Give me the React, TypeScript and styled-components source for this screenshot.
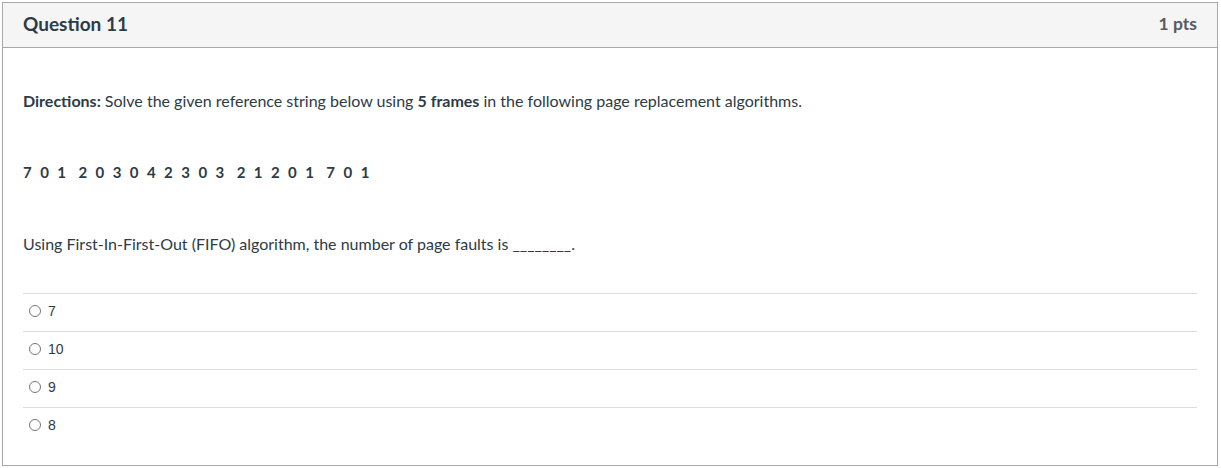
import styled, { createGlobalStyle } from "styled-components";

const GlobalStyle = createGlobalStyle`
  body {
    margin: 0;
    background: #ffffff;
    font-family: Lato, "Open Sans", sans-serif;
    color: #2d3b45;
  }
`;

const options = ["7", "10", "9", "8"];
const refGroups = ["7 0 1", "2 0 3 0 4 2 3 0 3", "2 1 2 0 1", "7 0 1"];

const App = () => {
  return (
    <>
      <GlobalStyle />
      <Card>
        <Header>
          <Title>Question 11</Title>
          <Points>1 pts</Points>
        </Header>
        <Body>
          <Text>
            <b>Directions:</b> Solve the given reference string below using <b>5 frames</b> in the following page replacement algorithms.
          </Text>
          <RefString>
            {refGroups.map((g, i) => (
              <Group key={i}>{g}</Group>
            ))}
          </RefString>
          <Question>Using First-In-First-Out (FIFO) algorithm, the number of page faults is ________.</Question>
          <Answers>
            {options.map((o) => (
              <Answer key={o}>
                <Radio />
                <AnswerText>{o}</AnswerText>
              </Answer>
            ))}
          </Answers>
        </Body>
      </Card>
    </>
  );
};

const Card = styled.div`
  margin: 2px 3px 0 2px;
  height: 464px;
  box-sizing: border-box;
  border: 1px solid #a8a8a8;
  display: flex;
  flex-direction: column;
`;

const Header = styled.div`
  height: 45px;
  box-sizing: border-box;
  background: #f5f5f5;
  border-bottom: 1px solid #a8a8a8;
  display: flex;
  align-items: center;
  justify-content: space-between;
  padding: 0 20px 3px 20px;
`;

const Title = styled.div`
  font-size: 19px;
  font-weight: 700;
  color: #2d3b45;
`;

const Points = styled.div`
  font-size: 17.5px;
  font-weight: 700;
  color: #555a5e;
`;

const Body = styled.div`
  padding: 41px 20px 0 20px;
  display: flex;
  flex-direction: column;
`;

const Text = styled.p`
  margin: 0;
  font-size: 16px;
  line-height: 24px;
  color: #2d3b45;
  b {
    font-weight: 700;
  }
`;

const RefString = styled.p`
  margin: 47px 0 0 0;
  font-size: 15px;
  line-height: 24px;
  font-weight: 700;
  letter-spacing: 2.4px;
  color: #2d3b45;
  display: flex;
  gap: 10px;
`;

const Group = styled.span``;

const Question = styled(Text)`
  margin-top: 48px;
`;

const Answers = styled.div`
  margin-top: 37px;
  display: flex;
  flex-direction: column;
`;

const Answer = styled.div`
  height: 38px;
  border-top: 1px solid #dcdcdc;
  box-sizing: border-box;
  display: flex;
  align-items: center;
  padding: 0 0 3px 6px;
  gap: 7px;
`;

const Radio = styled.span`
  width: 12px;
  height: 12px;
  border-radius: 50%;
  border: 1px solid #767676;
  box-sizing: border-box;
  background: #fff;
`;

const AnswerText = styled.span`
  font-family: "Liberation Sans", Arial, sans-serif;
  font-size: 14px;
  color: #2d3b45;
`;

export default App;
